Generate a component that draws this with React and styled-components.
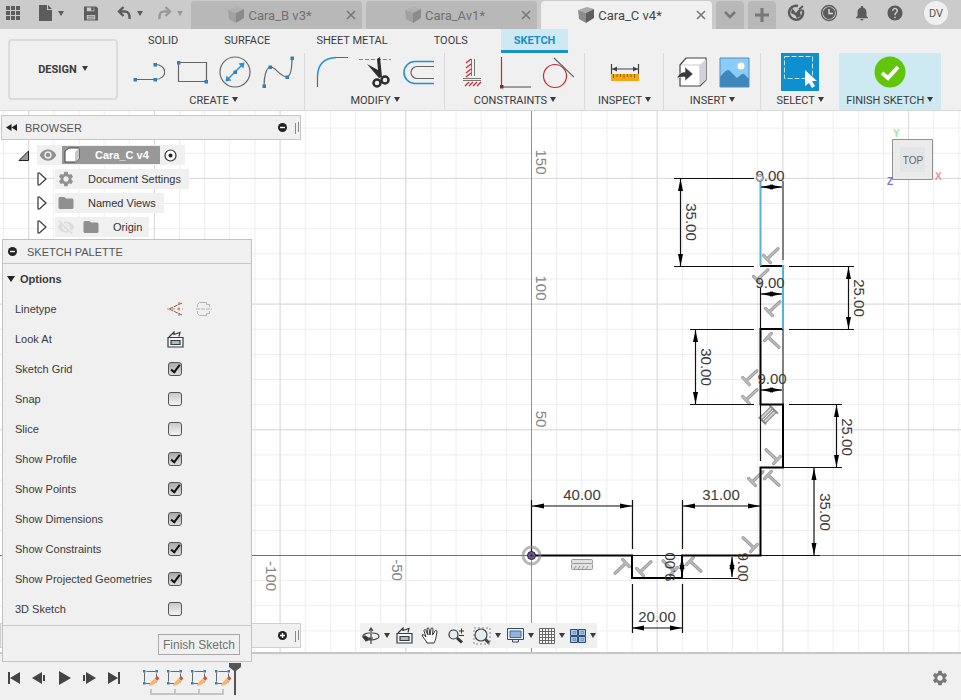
import styled, { createGlobalStyle } from "styled-components";
import { MdHelp, MdNotifications, MdVisibility, MdVisibilityOff, MdSettings, MdFolder } from "react-icons/md";

const GlobalStyle = createGlobalStyle`
* {
  box-sizing: border-box;
}
body {
  margin: 0;
  font-family: "Liberation Sans", Arial, sans-serif;
  font-size: 11px;
  color: #3a3a3a;
}
button {
  padding: 0;
  border: 0;
  background: none;
  color: inherit;
  font: inherit;
}
svg {
  display: block;
  flex-shrink: 0;
}
`;

const Page = styled.div`
  display: flex;
  flex-direction: column;
  min-height: 100vh;
  background: #f0f0f0;
`;

/* ---------- title bar ---------- */

const TitleBar = styled.header`
  display: flex;
  height: 29px;
  background: #cbcbcb;
  font-family: Roboto, sans-serif;
`;

const QuickTools = styled.div`
  display: flex;
  align-items: center;
  width: 191px;
  padding: 0 0 3px 5px;
  color: #5c5c5c;
`;

const QuickButton = styled.button`
  display: flex;
  align-items: center;
  gap: 5px;
  margin-right: ${(p) => p.$after || 0}px;
  color: ${(p) => (p.$off ? "#999" : "#5c5c5c")};
`;

const DocTabs = styled.nav`
  display: flex;
  gap: 4px;
  padding-top: 1px;
`;

const DocTab = styled.div`
  display: flex;
  align-items: center;
  width: 171px;
  padding: 0 3px 0 6px;
  border-radius: 4px 4px 0 0;
  background: ${(p) => (p.$active ? "#f0f0f0" : "#b8b8b8")};
  color: ${(p) => (p.$active ? "#444" : "#707070")};
`;

const DocName = styled.button`
  display: flex;
  flex: 1;
  align-items: center;
  justify-content: center;
  gap: 4px;
  font-size: 13px;
`;

const CloseButton = styled.button`
  display: flex;
  justify-content: center;
  width: 16px;
  color: #777;
`;

const SquareTab = styled.button`
  display: flex;
  align-items: center;
  justify-content: center;
  width: 28px;
  border-radius: 4px 4px 0 0;
  background: #b8b8b8;
  color: #777;
`;

const StatusIcons = styled.div`
  display: flex;
  align-items: center;
  gap: 15px;
  padding: 0 0 3px 11px;
  color: #5a5a5a;
`;

const Avatar = styled.button`
  width: 24px;
  height: 24px;
  margin-left: 5px;
  border-radius: 50%;
  background: #f0f0f0;
  color: #555;
  font-size: 11px;
`;

/* ---------- ribbon ---------- */

const Ribbon = styled.section`
  display: flex;
  height: 82px;
  border-bottom: 1px solid #d8d8d8;
  font-family: Roboto, sans-serif;
`;

const DesignButton = styled.button`
  width: 110px;
  height: 61px;
  margin: 10px 4px 0 8px;
  border: 2px solid #dcdcdc;
  border-radius: 4px;
  font-size: 11px;
  font-weight: 700;
`;

const RibbonBody = styled.div`
  display: flex;
  flex-direction: column;
`;

const RibbonTabs = styled.nav`
  display: flex;
  gap: 20px;
  height: 24px;
  padding-left: 13px;
`;

const RibbonTab = styled.button`
  padding: 1px 13px 0;
  border-bottom: 3px solid ${(p) => (p.$active ? "#1b8fc6" : "transparent")};
  background: ${(p) => (p.$active ? "#cde9f4" : "none")};
  color: ${(p) => (p.$active ? "#1b8fc6" : "#3c3c3c")};
  font-size: 11px;
  font-weight: ${(p) => (p.$active ? 700 : 400)};
`;

const Groups = styled.div`
  display: flex;
  flex: 1;
`;

const Group = styled.div`
  display: flex;
  flex-direction: column;
  align-items: center;
  min-width: 78px;
  padding: ${(p) => (p.$finish ? "0 5px" : "0 10px 0 11px")};
  border-right: 1px solid ${(p) => (p.$plain ? "transparent" : "#dadada")};
  background: ${(p) => (p.$finish ? "#cdeaf3" : "none")};
`;

const GroupIcons = styled.div`
  display: flex;
  align-items: center;
  gap: 11px;
  height: 38px;
`;

const GroupLabel = styled.button`
  padding: 3px 2px;
  font-size: 11px;
  white-space: nowrap;
`;

const CaretSvg = styled.svg`
  display: inline-block;
  margin-left: ${(p) => p.$gap || 0}px;
  vertical-align: 2px;
`;

/* ---------- canvas ---------- */

const Canvas = styled.main`
  position: relative;
  display: flex;
  flex: 1;
  flex-direction: column;
  justify-content: space-between;
  padding: 4px 0;
  background: #fff;
`;

const Drawing = styled.svg`
  position: absolute;
  inset: 0;
  width: 100%;
  height: 100%;
  font-family: "Liberation Sans", Arial, sans-serif;
`;

const Browser = styled.aside`
  position: relative;
  width: 301px;
  padding-left: 1px;
`;

const PanelBar = styled.div`
  display: flex;
  align-items: center;
  gap: 8px;
  height: 25px;
  padding: 0 1px 0 4px;
  border: 1px solid #c6c6c6;
  background: #f0f0f0;
  color: #555;
`;

const PanelTitle = styled.h2`
  flex: 1;
  margin: 0;
  font-size: 11px;
  font-weight: 400;
`;

const Tree = styled.ul`
  margin: 3px 0 0;
  padding: 0;
  list-style: none;
`;

const TreeRow = styled.li`
  display: flex;
  align-items: center;
  gap: 8px;
  height: 24px;
  padding-left: ${(p) => (p.$root ? 17 : 36)}px;
`;

const TreeItem = styled.div`
  display: flex;
  align-items: center;
  gap: ${(p) => p.$gap || 0}px;
  height: 20px;
  padding: 0 ${(p) => p.$right || 8}px 0 2px;
  background: #f0f0f0;
  color: #333;
`;

const RootName = styled.button`
  display: flex;
  align-items: center;
  gap: 15px;
  height: 18px;
  margin: 0 4px 0 5px;
  padding: 0 11px 0 2px;
  background: #989898;
  color: #fff;
  font-weight: 700;
`;

const BottomRow = styled.div`
  position: relative;
  display: flex;
  gap: 59px;
  height: 25px;
`;

const CommentsBar = styled.div`
  display: flex;
  align-items: center;
  justify-content: flex-end;
  gap: 8px;
  width: 301px;
  padding-right: 1px;
  border: 1px solid #d0d0d0;
  background: #f0f0f0;
`;

const NavBar = styled.div`
  display: flex;
  align-items: center;
  width: 237px;
  padding-left: 2px;
  background: #f0f0f0;
`;

const NavButton = styled.button`
  display: flex;
  align-items: center;
  gap: 4px;
  margin-right: ${(p) => p.$after}px;
`;

const ViewCube = styled.svg`
  position: absolute;
  top: 14px;
  right: 17px;
  font-family: "Liberation Sans", Arial, sans-serif;
`;

/* floats over the canvas and the edge of the timeline */
const Palette = styled.aside`
  position: absolute;
  z-index: 2;
  top: 128px;
  left: 2px;
  width: 250px;
  border: 1px solid #c2c2c2;
  background: #f0f0f0;
`;

const PaletteHead = styled.div`
  display: flex;
  align-items: center;
  gap: 10px;
  height: 24px;
  padding-left: 5px;
  border-bottom: 1px solid #c8c8c8;
  color: #555;
`;

const OptionsHead = styled.h3`
  display: flex;
  align-items: center;
  gap: 5px;
  height: 30px;
  margin: 0;
  padding-left: 4px;
  font-size: 11px;
`;

const OptionRow = styled.div`
  display: grid;
  grid-template-columns: 152px 1fr;
  align-items: center;
  height: 30px;
  padding-left: 12px;
`;

const OptionIcons = styled.div`
  display: flex;
  gap: 13px;
`;

const Checkbox = styled.input`
  position: relative;
  appearance: none;
  width: 14px;
  height: 14px;
  margin: 0 1px;
  border: 1px solid #555;
  border-radius: 3px;
  background: linear-gradient(#c8c8c8, #f4f4f4);

  &:checked {
    background: linear-gradient(#a8a8a8, #dcdcdc);
  }
  &:checked::after {
    content: "";
    position: absolute;
    box-sizing: border-box;
    top: 0;
    left: 4px;
    width: 5px;
    height: 10px;
    border: solid #111;
    border-width: 0 2px 2px 0;
    transform: rotate(38deg);
  }
`;

const PaletteFoot = styled.div`
  display: flex;
  justify-content: flex-end;
  padding: 8px 11px 6px;
  margin-top: 1px;
  border-top: 1px solid #c8c8c8;
`;

const FinishButton = styled.button`
  height: 21px;
  padding: 0 4px;
  border: 1px solid #a8a8a8;
  color: #707070;
  font-size: 12px;
`;

/* ---------- timeline ---------- */

const Timeline = styled.footer`
  display: flex;
  align-items: center;
  height: 48px;
  padding: 2px 12px 0 7px;
  border-top: 2px solid #c6c6c6;
  background: #f0f0f0;
`;

const Player = styled.div`
  display: flex;
  gap: 11px;
`;

const Features = styled.div`
  flex: 1;
  padding-left: 20px;
`;

const Caret = ({ gap, color = "currentColor" }) => (
  <CaretSvg $gap={gap} width="6" height="5" viewBox="0 0 6 5" aria-hidden="true">
    <path d="M0 0h6L3 5z" fill={color} />
  </CaretSvg>
);

const Cube = ({ faded }) => (
  <svg width="16" height="16" viewBox="0 0 16 16" opacity={faded ? 0.5 : 1}>
    <path d="M0 3l9-3 7 2-8 4z" fill="#aaa" />
    <path d="M0 3l8 3v10l-7-4z" fill="#8c8c8c" />
    <path d="M8 6l8-4v9l-8 5z" fill="#606060" />
  </svg>
);

const CloseIcon = () => (
  <svg width="10" height="10" viewBox="0 0 10 10" stroke="currentColor" strokeWidth="1.6">
    <path d="M1 1l8 8M9 1l-8 8" />
  </svg>
);

const UndoIcon = ({ flip }) => (
  <svg width="15" height="16" viewBox="0 0 15 16">
    <g fill="none" stroke="currentColor" strokeWidth="2.400" transform={flip ? "matrix(-1 0 0 1 15 0)" : undefined}>
      <path d="M6.500 2L2 6.500l4.500 4.500" />
      <path d="M2.500 6.500H8c3.500 0 5 3 4.500 7.500" />
    </g>
  </svg>
);

const CircleSign = ({ plus }) => (
  <svg width="9" height="9" viewBox="0 0 9 9">
    <circle cx="4.500" cy="4.500" r="4.500" fill="#222" />
    <path d={plus ? "M2 4.500h5M4.500 2v5" : "M2 4.500h5"} stroke="#fff" strokeWidth="1.400" />
  </svg>
);

const Grip = () => (
  <svg width="4" height="12" viewBox="0 0 4 12" stroke="#888">
    <path d="M.5 1v11M3.500 0v10" />
  </svg>
);

const Dot = ({ x, y }) => <rect x={x - 1.5} y={y - 1.5} width="3.500" height="3.500" fill="#2f7fb8" stroke="none" />;

const Tool = ({ label, children }) => (
  <button aria-label={label}>
    <svg width="32" height="34" viewBox="0 0 32 34" fill="none" stroke="#666" strokeWidth="1.200">
      {children}
    </svg>
  </button>
);

const LookAtIcon = () => (
  <svg width="17" height="17" viewBox="0 0 17 17" fill="none" stroke="#333b45" strokeWidth="1.200">
    <path d="M1 6.500h15v9.500H1z" fill="#f7f7f7" />
    <path d="M4 9.500h9v4H4z" fill="#b0b8c0" />
    <path d="M2 6l5-5v2.500l6-2-1 4" />
  </svg>
);

const TreeArrow = () => (
  <svg width="10" height="14" viewBox="0 0 10 14">
    <path d="M1 1h1.500L9 7l-6.500 6H1z" fill="#fff" stroke="#333" strokeWidth="1.200" />
  </svg>
);

const docs = [
  { name: "Cara_B v3*" },
  { name: "Cara_Av1*" },
  { name: "Cara_C v4*", active: true },
];

const options = [
  ["Sketch Grid", true],
  ["Snap", false],
  ["Slice", false],
  ["Show Profile", true],
  ["Show Points", true],
  ["Show Dimensions", true],
  ["Show Constraints", true],
  ["Show Projected Geometries", true],
  ["3D Sketch", false],
];

// x, y of the bar and direction of the stem
const perpendiculars = [
  [767, 259, -43], [757, 280, -43], [769, 312, -43], [768, 337, 43],
  [746, 381, -43], [746, 400, -43], [777, 460, -137], [752, 482, -43],
  [768, 475, 43], [754, 548, -137], [626, 563, 137], [640, 572, -43],
  [674, 571, -137], [690, 561, 43],
];

const Arrow = ({ x, y, angle, size = 12 }) => (
  <path d={`M0 0L${size} -2.500V2.500z`} fill="#000" transform={`translate(${x} ${y}) rotate(${angle})`} />
);

const DimH = ({ x1, x2, y, tx, ty, text }) => (
  <g>
    <path d={`M${x1} ${y}H${x2}`} stroke="#111" strokeWidth="1.200" />
    <Arrow x={x1} y={y} angle={0} />
    <Arrow x={x2} y={y} angle={180} />
    <text x={tx} y={ty + 5} textAnchor="middle">{text}</text>
  </g>
);

const DimV = ({ x, y1, y2, tx, ty, text, angle = 90 }) => (
  <g>
    <path d={`M${x} ${y1}V${y2}`} stroke="#111" strokeWidth="1.200" />
    <Arrow x={x} y={y1} angle={90} />
    <Arrow x={x} y={y2} angle={-90} />
    <text textAnchor="middle" transform={`translate(${tx} ${ty}) rotate(${angle})`} y="5">{text}</text>
  </g>
);

const AxisLabel = ({ x, y, children }) => (
  <text textAnchor="middle" y="5" transform={`translate(${x} ${y}) rotate(90)`} fill="#858585">
    {children}
  </text>
);

function Sketch() {
  return (
    <Drawing>
      <defs>
        <pattern id="minor" width="25.140" height="25.140" x="531" y="444" patternUnits="userSpaceOnUse">
          <path d="M.5 0V25.140M0 .5H25.140" stroke="#ededed" />
        </pattern>
        <pattern id="major" width="125.700" height="125.700" x="531" y="444" patternUnits="userSpaceOnUse">
          <path d="M.5 0V125.700M0 .5H125.700" stroke="#dadada" />
        </pattern>
      </defs>
      <rect width="100%" height="100%" fill="url(#minor)" />
      <rect width="100%" height="100%" fill="url(#major)" />
      <rect x="0" y="444" width="100%" height="1" fill="#c94a5c" />
      <rect x="531" y="0" width="1" height="100%" fill="#4fc04f" />
      <g transform="translate(0 -111)" fontSize="15" fill="#3a3a3a">
        <AxisLabel x={541} y={162}>150</AxisLabel>
        <AxisLabel x={541} y={288}>100</AxisLabel>
        <AxisLabel x={541} y={419}>50</AxisLabel>
        <AxisLabel x={397} y={570}>-50</AxisLabel>
        <AxisLabel x={271} y={576}>-100</AxisLabel>

        {perpendiculars.map(([x, y, angle]) => (
          <g key={`${x}-${y}`} transform={`translate(${x} ${y}) rotate(${angle})`} strokeLinecap="round">
            <path d="M0-5V5M0 0H15" stroke="#999" strokeWidth="3.200" />
            <path d="M0-5V5M0 0H15" stroke="#bdbdbd" strokeWidth="1.600" />
          </g>
        ))}
        <g transform="translate(768 415) rotate(-45)" fill="#d0d0d0" stroke="#888">
          <rect x="-8" y="-4" width="16" height="3" />
          <rect x="-8" y="1" width="16" height="3" />
          <path d="M-8-5V5M8-6V6" strokeWidth="2" />
        </g>
        <g fill="#e0e0e0" stroke="#999">
          <rect x="571.500" y="559.500" width="21" height="4" rx="1" />
          <rect x="571.500" y="563.500" width="21" height="6" rx="1" />
          <path d="M574 569l2-3M578 569l2-3M582 569l2-3M586 569l2-3" />
        </g>

        <g fill="none" stroke="#111" strokeWidth="1.200">
          <path d="M531.500 500V555M632.500 500V549M682.500 500V549M632.500 584V633M682.500 584V633" />
          <path d="M674 178.500H754M674 266.500H754M789 266.500H854M789 329.500H854" />
          <path d="M690 329.500H754M690 404.500H754M789 404.500H842M783 467.500H842" />
          <path d="M632 555.500H820M682 578.500H738M760.500 288V329M760.500 404V461" />
        </g>
        <path d="M783 181V260M783 329V404" stroke="#666" strokeWidth="1.600" />
        <path
          d="M531 555.500H632V578H682V555.500H760.500V467.500H783V404.500H760.500V329H783M783 266H760"
          fill="none"
          stroke="#000"
          strokeWidth="2"
        />
        <path d="M760.500 181V266M783 265V329" stroke="#55b3d6" strokeWidth="2" />

        <DimH x1={532} x2={632} y={506} tx={582} ty={495} text="40.00" />
        <DimH x1={683} x2={760} y={506} tx={721} ty={495} text="31.00" />
        <DimH x1={632} x2={682} y={628} tx={657} ty={617} text="20.00" />
        <DimH x1={761} x2={782} y={187} tx={770} ty={176} text="9.00" />
        <DimH x1={761} x2={782} y={294} tx={770} ty={283} text="9.00" />
        <DimH x1={761} x2={782} y={390} tx={772} ty={379} text="9.00" />
        <DimV x={680.5} y1={179} y2={266} tx={691} ty={222} text="35.00" />
        <DimV x={848.5} y1={267} y2={329} tx={859} ty={298} text="25.00" />
        <DimV x={695.5} y1={330} y2={404} tx={706} ty={367} text="30.00" />
        <DimV x={836.5} y1={405} y2={467} tx={847} ty={437} text="25.00" />
        <DimV x={814} y1={468} y2={555} tx={825} ty={512} text="35.00" />
        <DimV x={732} y1={557} y2={577} tx={743} ty={567} text="9.00" />
        <DimV x={682} y1={557} y2={577} tx={670} ty={567} angle={-90} text="9.00" />

        <circle cx="760" cy="178" r="3.500" fill="#fff" fillOpacity=".6" stroke="#777" />
        <circle cx="531.500" cy="555.500" r="8.500" fill="none" stroke="#888" strokeOpacity=".6" strokeWidth="3" />
        <circle cx="531.500" cy="555.500" r="4" fill="#6d5a8c" stroke="#2b2038" />
        <circle cx="531.500" cy="555.500" r="1" fill="#111" />
      </g>
    </Drawing>
  );
}

function TopBar() {
  return (
    <TitleBar>
      <QuickTools>
        <QuickButton aria-label="Data panel" $after={18}>
          <svg width="16" height="16" viewBox="0 0 16 16" fill="currentColor">
            <path d="M1 1h4v4H1zM6 1h4v4H6zM11 1h4v4h-4zM1 6h4v4H1zM6 6h4v4H6zM11 6h4v4h-4zM1 11h4v4H1zM6 11h4v4H6zM11 11h4v4h-4z" />
          </svg>
        </QuickButton>
        <QuickButton aria-label="File" $after={20}>
          <svg width="14" height="16" viewBox="0 0 14 16" fill="currentColor">
            <path d="M0 0h8v5h5v11H0z" />
            <path d="M9 0l4 4H9z" />
          </svg>
          <Caret />
        </QuickButton>
        <QuickButton aria-label="Save" $after={19}>
          <svg width="14" height="15" viewBox="0 0 15 15">
            <path d="M0 0h13l2 2v13H0z" fill="currentColor" />
            <path d="M3 1h8v4H3zM3 9h9v5H3z" fill="#cbcbcb" />
            <path d="M8 1h2v3H8zM4 10.500h7M4 12.500h7" fill="currentColor" stroke="currentColor" strokeWidth=".7" />
          </svg>
        </QuickButton>
        <QuickButton aria-label="Undo" $after={14}>
          <UndoIcon />
          <Caret />
        </QuickButton>
        <QuickButton aria-label="Redo" $off>
          <UndoIcon flip />
          <Caret />
        </QuickButton>
      </QuickTools>
      <DocTabs>
        {docs.map((doc) => (
          <DocTab key={doc.name} $active={doc.active}>
            <DocName>
              <Cube faded={!doc.active} />
              {doc.name}
            </DocName>
            <CloseButton aria-label={`Close ${doc.name}`}>
              <CloseIcon />
            </CloseButton>
          </DocTab>
        ))}
        <SquareTab aria-label="More tabs">
          <svg width="12" height="8" viewBox="0 0 12 8" fill="none" stroke="currentColor" strokeWidth="2.500">
            <path d="M1 1l5 5 5-5" />
          </svg>
        </SquareTab>
        <SquareTab aria-label="New tab">
          <svg width="14" height="14" viewBox="0 0 14 14" stroke="currentColor" strokeWidth="3">
            <path d="M7 0v14M0 7h14" />
          </svg>
        </SquareTab>
      </DocTabs>
      <StatusIcons>
        <button aria-label="Extensions">
          <svg width="18" height="18" viewBox="0 0 18 18" fill="none" stroke="currentColor">
            <path d="M11 2a7 7 0 1 0 4.500 4" strokeWidth="2.400" />
            <path d="M5 4l4 5 2-3 5-1-3 3 1 4-4 2-2-3-4-2z" fill="currentColor" stroke="none" />
            <path d="M12 5.500L16 2" strokeWidth="2" />
          </svg>
        </button>
        <button aria-label="Job status">
          <svg width="18" height="18" viewBox="0 0 18 18" fill="none" stroke="currentColor">
            <circle cx="9" cy="9" r="7.500" strokeWidth="1.300" />
            <circle cx="9" cy="9" r="5.500" fill="currentColor" />
            <path d="M9 5v4.500h4" stroke="#ddd" strokeWidth="1.400" />
          </svg>
        </button>
        <button aria-label="Notifications">
          <MdNotifications size={18} />
        </button>
        <button aria-label="Help">
          <MdHelp size={18} />
        </button>
        <Avatar>DV</Avatar>
      </StatusIcons>
    </TitleBar>
  );
}

function RibbonBar() {
  return (
    <Ribbon>
      <DesignButton>
        DESIGN
        <Caret gap={5} />
      </DesignButton>
      <RibbonBody>
        <RibbonTabs>
          <RibbonTab>SOLID</RibbonTab>
          <RibbonTab>SURFACE</RibbonTab>
          <RibbonTab>SHEET METAL</RibbonTab>
          <RibbonTab>TOOLS</RibbonTab>
          <RibbonTab $active>SKETCH</RibbonTab>
        </RibbonTabs>
        <Groups>
          <Group>
            <GroupIcons>
              <Tool label="Line">
                <path d="M2 24.500h20c13 0 13-15 0-15" />
                <Dot x={2} y={24.5} />
                <Dot x={22} y={24.5} />
                <Dot x={22} y={9.5} />
              </Tool>
              <Tool label="Rectangle">
                <path d="M2.500 7.500h28v19h-28z" />
                <Dot x={2.5} y={7.5} />
                <Dot x={30} y={26.5} />
              </Tool>
              <Tool label="Circle">
                <circle cx="16" cy="17" r="15" />
                <path d="M8 25L24 9" stroke="#2b8fd0" strokeWidth="1.500" />
                <path d="M25.500 7.500l-1 6-5-5zM6.500 26.500l1-6 5 5z" fill="#2b8fd0" stroke="none" />
                <Dot x={16} y={17} />
              </Tool>
              <Tool label="Spline">
                <path d="M2 31C2 22 4 13 8 12C13 11 18 22 25 22C29 21 30 12 30 3" />
                <Dot x={2} y={31} />
                <Dot x={8} y={12} />
                <Dot x={25} y={22} />
                <Dot x={30} y={3} />
              </Tool>
            </GroupIcons>
            <GroupLabel>
              CREATE
              <Caret gap={3} />
            </GroupLabel>
          </Group>
          <Group>
            <GroupIcons>
              <Tool label="Fillet">
                <path d="M1.500 32V21M20 2.500h12" />
                <path d="M1.500 21C2 9 9 3 20 2.500" stroke="#2b8fd0" strokeWidth="1.500" />
              </Tool>
              <Tool label="Trim">
                <path d="M0 4.500h32" stroke="#5a9aa8" strokeDasharray="4 2" />
                <path d="M8 9l12 14 3-1L21 2l-3 2 1 11z" fill="#2d2d2d" stroke="none" />
                <circle cx="18" cy="28" r="3.500" stroke="#2d2d2d" strokeWidth="2.500" />
                <circle cx="26" cy="25" r="3.500" stroke="#2d2d2d" strokeWidth="2.500" />
              </Tool>
              <Tool label="Offset">
                <path d="M32 6.500H13a11 11 0 0 0 0 22h19" stroke="#2b8fd0" strokeWidth="1.600" />
                <path d="M32 11.500H15a6 6 0 0 0 0 12h17" />
              </Tool>
            </GroupIcons>
            <GroupLabel>
              MODIFY
              <Caret gap={3} />
            </GroupLabel>
          </Group>
          <Group>
            <GroupIcons>
              <Tool label="Horizontal or vertical">
                <path d="M15.500 4v17M18.500 4v17M7 25.500h18M7 23.500h18" stroke="#777" strokeWidth="1" />
                <path d="M10 8l5-4M10 13l5-4M10 18l5-4M10 22l5-4M9 31l4-4M13 31l4-4M17 31l4-4M21 31l4-4" stroke="#c8282c" />
              </Tool>
              <Tool label="Coincident">
                <path d="M2.500 2v30" stroke="#c8282c" />
                <path d="M2.500 32h30" />
                <path d="M1 30h3.500v3.500H1z" fill="#8c2a2a" stroke="none" />
              </Tool>
              <Tool label="Tangent">
                <circle cx="13" cy="21" r="11.500" stroke="#c8282c" />
                <path d="M12 3l20 19" />
              </Tool>
            </GroupIcons>
            <GroupLabel>
              CONSTRAINTS
              <Caret gap={3} />
            </GroupLabel>
          </Group>
          <Group>
            <GroupIcons>
              <Tool label="Measure">
                <path d="M2.500 9v10M29.500 9v10M3 14h26" stroke="#444" />
                <path d="M3 14l5-2.500v5zM29 14l-5-2.500v5z" fill="#444" stroke="none" />
                <path d="M2 19h28v7H2z" fill="#f3a712" stroke="none" />
                <path d="M4.500 19v4M8 19v3M11.500 19v3M15 19v4M18.500 19v3M22 19v3M25.500 19v4" stroke="#7a5200" strokeWidth=".8" />
              </Tool>
            </GroupIcons>
            <GroupLabel>
              INSPECT
              <Caret gap={3} />
            </GroupLabel>
          </Group>
          <Group>
            <GroupIcons>
              <Tool label="Insert derive">
                <path d="M5 10l6-7h20v22l-6 6H5z" fill="#fff" stroke="#444" />
                <path d="M25 10l6-6v21l-6 5z" fill="#cfd3d8" stroke="none" />
                <path d="M6 10h19v20" stroke="#ccc" />
                <path d="M2 24c1-5 4-7 8-7v-5l8 7-8 7v-4c-4 0-6 0-8 2z" fill="#3a3a3a" stroke="#f0f0f0" strokeWidth=".6" />
              </Tool>
              <Tool label="Insert canvas">
                <path d="M2 3h29v29H2z" fill="#8bcbf8" stroke="none" />
                <circle cx="23" cy="11" r="3.500" fill="#fffbe0" stroke="none" />
                <path d="M2 22c4-4 7-9 10-6l7 7c3-2 5-5 7-4l5 5v8H2z" fill="#3d87bd" stroke="none" />
                <path d="M2 3h29v29H2z" stroke="#4f8fbe" strokeWidth="1" />
              </Tool>
            </GroupIcons>
            <GroupLabel>
              INSERT
              <Caret gap={3} />
            </GroupLabel>
          </Group>
          <Group $plain>
            <GroupIcons>
              <button aria-label="Select">
                <svg width="38" height="38" viewBox="0 0 38 38">
                  <path d="M0 0h38v38H0z" fill="#0d8fd0" />
                  <path d="M3.500 3.500h28v22h-28z" fill="none" stroke="#bde6ee" strokeDasharray="5 2" />
                  <path d="M24 17v16l4-3 3 5 3-2-3-5h5z" fill="#fff" />
                </svg>
              </button>
            </GroupIcons>
            <GroupLabel>
              SELECT
              <Caret gap={3} />
            </GroupLabel>
          </Group>
          <Group $plain $finish>
            <GroupIcons>
              <Tool label="Finish sketch">
                <circle cx="16" cy="17" r="15.500" fill="#63c50a" stroke="none" />
                <path d="M8 18l6 5 10-11" stroke="#fff" strokeWidth="4" />
              </Tool>
            </GroupIcons>
            <GroupLabel>
              FINISH SKETCH
              <Caret gap={3} />
            </GroupLabel>
          </Group>
        </Groups>
      </RibbonBody>
    </Ribbon>
  );
}

function BrowserPanel() {
  return (
    <Browser>
      <PanelBar>
        <svg width="11" height="7" viewBox="0 0 11 7" fill="#222">
          <path d="M5.500 0v7L0 3.500zM11 0v7L5.500 3.500z" />
        </svg>
        <PanelTitle>BROWSER</PanelTitle>
        <CircleSign />
        <Grip />
      </PanelBar>
      <Tree>
        <TreeRow $root>
          <svg width="11" height="11" viewBox="0 0 11 11">
            <path d="M1 10.500h9.500V1z" fill="#999" stroke="#222" />
          </svg>
          <TreeItem $right={8}>
            <MdVisibility size={18} color="#909090" />
            <RootName>
              <svg width="16" height="16" viewBox="0 0 16 16">
                <path d="M1 4l4-3h10v11l-4 3H1z" fill="#fff" stroke="#444" />
                <path d="M11 5l4-4v11l-4 3z" fill="#c8c8c8" />
              </svg>
              Cara_C v4
            </RootName>
            <svg width="13" height="13" viewBox="0 0 13 13">
              <circle cx="6.500" cy="6.500" r="5.500" fill="#fff" stroke="#333" strokeWidth="1.200" />
              <circle cx="6.500" cy="6.500" r="2" fill="#222" />
            </svg>
          </TreeItem>
        </TreeRow>
        <TreeRow>
          <TreeArrow />
          <TreeItem $gap={13}>
            <MdSettings size={18} color="#909090" />
            Document Settings
          </TreeItem>
        </TreeRow>
        <TreeRow>
          <TreeArrow />
          <TreeItem $gap={13}>
            <MdFolder size={18} color="#909090" />
            Named Views
          </TreeItem>
        </TreeRow>
        <TreeRow>
          <TreeArrow />
          <TreeItem $gap={5} $right={6}>
            <MdVisibilityOff size={18} color="#dcdcdc" />
            <TreeItem $gap={13} $right={1}>
              <MdFolder size={18} color="#909090" />
              Origin
            </TreeItem>
          </TreeItem>
        </TreeRow>
      </Tree>
    </Browser>
  );
}

function SketchPalette() {
  return (
    <Palette>
      <PaletteHead>
        <CircleSign />
        <PanelTitle>SKETCH PALETTE</PanelTitle>
      </PaletteHead>
      <OptionsHead>
        <svg width="8" height="6" viewBox="0 0 8 6">
          <path d="M0 0h8L4 6z" fill="#222" />
        </svg>
        Options
      </OptionsHead>
      <OptionRow>
        <span>Linetype</span>
        <OptionIcons>
          <button aria-label="Construction">
            <svg width="16" height="16" viewBox="0 0 16 16" fill="none" stroke="#b0653c">
              <path d="M15 2L2 8l13 6" strokeDasharray="4 1" stroke="#7c5a4a" />
              <path d="M0 8h16" stroke="#d88a5c" strokeDasharray="3 2" />
              <path d="M12 1v3M12 12v3M12 6.500v3" />
            </svg>
          </button>
          <button aria-label="Centerline">
            <svg width="16" height="16" viewBox="0 0 16 16" fill="none" stroke="#b4b4b4">
              <path d="M1.500 6V3.500l2-2h7v2h3V6M1.500 10v2.500l2 2h7v-2h3V10" />
              <path d="M0 8h16" strokeDasharray="4 1" />
            </svg>
          </button>
        </OptionIcons>
      </OptionRow>
      <OptionRow>
        <span>Look At</span>
        <OptionIcons>
          <button aria-label="Look At">
            <LookAtIcon />
          </button>
        </OptionIcons>
      </OptionRow>
      {options.map(([name, on]) => (
        <OptionRow key={name}>
          <label htmlFor={name}>{name}</label>
          <Checkbox type="checkbox" id={name} defaultChecked={on} />
        </OptionRow>
      ))}
      <PaletteFoot>
        <FinishButton>Finish Sketch</FinishButton>
      </PaletteFoot>
    </Palette>
  );
}

function Navigation() {
  return (
    <NavBar>
      <NavButton aria-label="Orbit" $after={6}>
        <svg width="18" height="18" viewBox="0 0 18 18" fill="none" stroke="#444" strokeWidth="1.200">
          <path d="M9 1v16M7 4l2-3 2 3" />
          <path d="M8 6C3 6 1 8 1 9.500S4 13 9 13s8-2 8-3.500S15 6 10 6" />
          <path d="M3 9l-2 1 3 4 4-2zM6 11h5" fill="#333" />
        </svg>
        <Caret />
      </NavButton>
      <NavButton aria-label="Look At" $after={8}>
        <LookAtIcon />
      </NavButton>
      <NavButton aria-label="Pan" $after={8}>
        <svg width="18" height="18" viewBox="0 0 18 18" fill="#fff" stroke="#333">
          <path d="M6 16c-1-3-4-5-5-8 1-1 2 0 4 2L3 4c0-2 2-2 2 0l2 4-1-6c0-1.500 2-1.500 2 0l1 6 1-6c0-1.500 2-1.500 2 0l-.5 6L14 4c.5-1 2-1 2 1-1 4-1 8-3 11z" />
        </svg>
      </NavButton>
      <NavButton aria-label="Zoom" $after={8}>
        <svg width="18" height="18" viewBox="0 0 18 18" fill="none" stroke="#333" strokeWidth="1.200">
          <circle cx="6.500" cy="7.500" r="4.500" fill="#e4eef2" />
          <path d="M10 11l5 4.500" strokeWidth="3" />
          <path d="M12 4h5M14.500 1.500v5M12 8.500h5" strokeWidth="1" />
        </svg>
      </NavButton>
      <NavButton aria-label="Fit" $after={6}>
        <svg width="18" height="18" viewBox="0 0 18 18" fill="none" stroke="#444" strokeWidth="1.200">
          <path d="M1 1h16v16H1z" strokeDasharray="2 2" stroke="#888" strokeWidth="1" />
          <circle cx="8" cy="8" r="6" fill="#e0eeee" />
          <path d="M12.500 12.500L16 16" strokeWidth="3" />
        </svg>
        <Caret />
      </NavButton>
      <NavButton aria-label="Display settings" $after={5}>
        <svg width="17" height="17" viewBox="0 0 17 17" fill="#e8eef4" stroke="#3b4a5a">
          <path d="M.5 1.500h16v11H.5z" />
          <path d="M3 4h11v6.500H3z" fill="#8db4e0" stroke="#4a6a94" />
          <path d="M5.500 13v2h6v-2" />
        </svg>
        <Caret />
      </NavButton>
      <NavButton aria-label="Grid and snaps" $after={5}>
        <svg width="16" height="16" viewBox="0 0 16 16" fill="#fff" stroke="#666">
          <path d="M.5.5h15v15H.5zM3.500 0v16M6.500 0v16M9.500 0v16M12.500 0v16M0 3.500h16M0 6.500h16M0 9.500h16M0 12.500h16" />
        </svg>
        <Caret />
      </NavButton>
      <NavButton aria-label="Viewports" $after={0}>
        <svg width="16" height="14" viewBox="0 0 16 14" fill="#a8c8ea" stroke="#2d4a70">
          <path d="M.5.5h7v6h-7zM8.500.5h7v6h-7zM.5 7.500h7v6h-7zM8.500 7.500h7v6h-7z" />
          <path d="M3 2.500h2.500v2H3zM11 2.500h2.500v2H11zM3 9.500h2.500v2H3zM11 9.500h2.500v2H11z" strokeWidth=".4" />
        </svg>
        <Caret />
      </NavButton>
    </NavBar>
  );
}

const playerIcons = [
  ["To start", "M1 1h2v12H1zM13 1v12L3 7z"],
  ["Step back", "M10 1v12L0 7zM11 4h2v6h-2z"],
  ["Play", "M2 0v14l12-7z"],
  ["Step forward", "M1 4h2v6H1zM4 1v12l10-6z"],
  ["To end", "M1 1v12l10-6zM11 1h2v12h-2z"],
];

export default function App() {
  return (
    <Page>
      <GlobalStyle />
      <TopBar />
      <RibbonBar />
      <Canvas>
        <Sketch />
        <BrowserPanel />
        <BottomRow>
          <CommentsBar>
            <CircleSign plus />
            <Grip />
          </CommentsBar>
          <Navigation />
        </BottomRow>
        <ViewCube width="62" height="64" viewBox="0 0 62 64" fontSize="10" fontWeight="700">
          <path d="M10.500 14.500h40v40h-40z" fill="#ebebeb" stroke="#909090" />
          <path d="M18 22h25v25H18z" fill="#e2e4e7" />
          <text x="31" y="39" textAnchor="middle" fontWeight="400" fill="#666">TOP</text>
          <text x="11" y="12" fill="#9be89b">Y</text>
          <text x="53" y="55" fill="#ef8f8f">X</text>
          <text x="5" y="60" fill="#7676ec">Z</text>
        </ViewCube>
        <SketchPalette />
      </Canvas>
      <Timeline>
        <Player>
          {playerIcons.map(([label, d]) => (
            <button key={label} aria-label={label}>
              <svg width="14" height="14" viewBox="0 0 14 14" fill="#444">
                <path d={d} />
              </svg>
            </button>
          ))}
        </Player>
        <Features>
          <svg width="104" height="38" viewBox="0 0 104 38" fill="none">
            {[0, 24, 48, 72].map((x) => (
              <g key={x} transform={`translate(${x} 0)`}>
                <path d="M3.500 12.500h12v12h-12z" stroke="#667" strokeDasharray="9 3" strokeDashoffset="-2" />
                <path d="M2 11h2.500v2.500H2zM14.500 11H17v2.500h-2.500zM2 23h2.500v2.500H2z" fill="#2f7fb8" />
                <path d="M9 24l5-5 3 3-5 4-4 1z" fill="#f0b96c" />
                <path d="M14 19l2-2 2.500 2.500-2 2z" fill="#d05050" />
              </g>
            ))}
            <path d="M10 30v5h72v-5M34 30v5M58 30v5" stroke="#c4c4c4" strokeWidth="2" />
            <path d="M88 4h12v4l-5 4h-2l-5-4z" fill="#555" />
            <path d="M94 9v27" stroke="#555" strokeWidth="2" />
          </svg>
        </Features>
        <button aria-label="Timeline settings">
          <MdSettings size={18} color="#777" />
        </button>
      </Timeline>
    </Page>
  );
}
